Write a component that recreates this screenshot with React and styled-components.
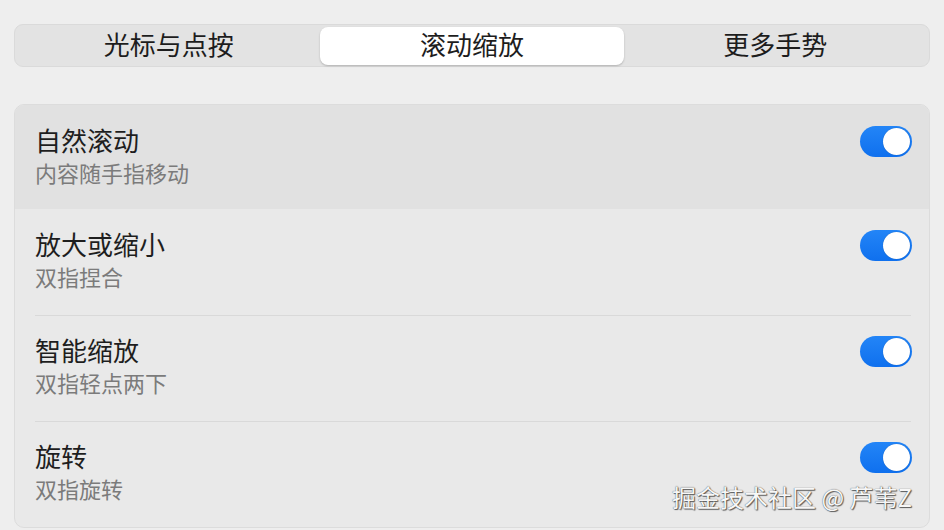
import React, { useState } from 'react'
import styled, { createGlobalStyle } from 'styled-components'

const GlobalStyle = createGlobalStyle`
body {
    margin: 0;
    background: #eeeeee;
    font-family: "Noto Sans CJK SC", "Noto Sans", sans-serif;
}
`

const tabs = ['光标与点按', '滚动缩放', '更多手势']

const options = [
    { title: '自然滚动', desc: '内容随手指移动' },
    { title: '放大或缩小', desc: '双指捏合' },
    { title: '智能缩放', desc: '双指轻点两下' },
    { title: '旋转', desc: '双指旋转' },
]

function Toggle({ on, onChange }) {
    return (
        <Switch $on={on} onClick={onChange}>
            <Knob $on={on} />
        </Switch>
    )
}

function App() {
    const [tab, setTab] = useState(1)
    const [values, setValues] = useState(options.map(() => true))

    const flip = (index) => {
        setValues(prev => prev.map((v, i) => i === index ? !v : v))
    }

    return (
        <Page>
            <GlobalStyle />

            <Segmented>
                {tabs.map((label, i) => (
                    <Segment key={label} $active={tab === i} onClick={() => setTab(i)}>{label}</Segment>
                ))}
            </Segmented>

            <Card>
                {options.map((option, i) => (
                    <Row key={option.title} $hover={i === 0} $divider={i > 1}>
                        <Texts>
                            <Title>{option.title}</Title>
                            <Desc>{option.desc}</Desc>
                        </Texts>
                        <Toggle on={values[i]} onChange={() => flip(i)} />
                    </Row>
                ))}
                <Watermark>掘金技术社区 @ 芦苇Z</Watermark>
            </Card>
        </Page>
    )
}

const Page = styled.main`
padding: 24px 14px 0 14px;
display: flex;
flex-direction: column;
gap: 37px;
`

const Segmented = styled.div`
display: grid;
grid-template-columns: repeat(3, 1fr);
height: 43px;
box-sizing: border-box;
padding: 2px 2px 1px 2px;
background: #e3e3e3;
border: 1px solid #dadada;
border-radius: 9px;
`

const Segment = styled.div`
display: flex;
align-items: center;
justify-content: center;
padding-bottom: 5px;
font-size: 26px;
line-height: 30px;
color: #1d1d1d;
border-radius: 8px;
cursor: default;
background: ${props => props.$active ? '#ffffff' : 'transparent'};
box-shadow: ${props => props.$active ? '0 1px 2px rgba(0, 0, 0, 0.22)' : 'none'};
`

const Card = styled.section`
position: relative;
background: #e9e9e9;
border: 1px solid #dcdcdc;
border-radius: 10px;
overflow: hidden;
`

const Row = styled.div`
position: relative;
height: 106px;
box-sizing: border-box;
padding: 17px 17px 0 20px;
display: flex;
justify-content: space-between;
align-items: flex-start;
background: ${props => props.$hover ? '#e1e1e1' : 'transparent'};

&:first-child {
    height: 104px;
}

&:last-child {
    height: 99px;
}

&::before {
    content: '';
    display: ${props => props.$divider ? 'block' : 'none'};
    position: absolute;
    top: 0;
    left: 20px;
    right: 18px;
    height: 1px;
    background: #d9d9d9;
}
`

const Texts = styled.div`
display: flex;
flex-direction: column;
`

const Title = styled.div`
font-size: 26px;
line-height: 36px;
color: #1e1e1e;
`

const Desc = styled.div`
margin-top: -1px;
font-size: 22px;
line-height: 30px;
color: #7b7b7b;
`

const Switch = styled.div`
margin-top: 4px;
width: 52px;
height: 31px;
border-radius: 16px;
box-sizing: border-box;
padding: 2px;
display: flex;
justify-content: ${props => props.$on ? 'flex-end' : 'flex-start'};
background: ${props => props.$on ? 'linear-gradient(180deg, #2385f7, #0f70ee)' : '#d4d4d4'};
cursor: pointer;
`

const Knob = styled.div`
width: 27px;
height: 27px;
border-radius: 50%;
background: #ffffff;
box-shadow: 0 0 1px rgba(0, 0, 0, 0.3);
`

const Watermark = styled.div`
position: absolute;
right: 17px;
bottom: 16px;
font-size: 24px;
line-height: 28px;
color: #f7f7f7;
text-shadow: 0 0 1px #333, 1px 1px 1px rgba(0, 0, 0, 0.6);
pointer-events: none;
`

export default App
